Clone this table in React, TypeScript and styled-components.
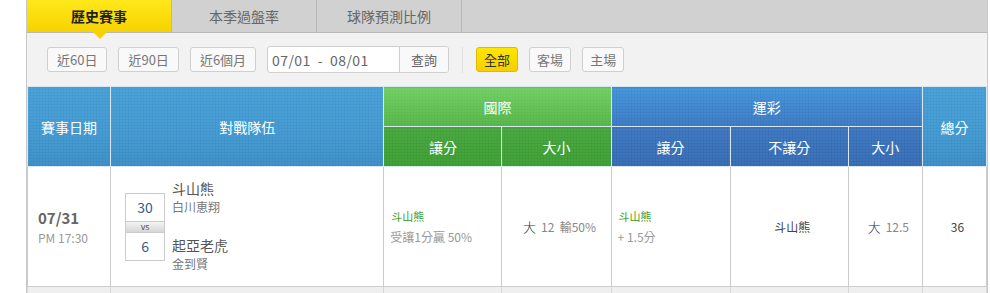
import React from "react";
import styled, { createGlobalStyle } from "styled-components";

const GlobalStyle = createGlobalStyle`
  body {
    margin: 0;
    background: #ffffff;
    font-family: "Noto Sans CJK TC", "Noto Sans", "Liberation Sans", sans-serif;
  }
`;

const Wrapper = styled.div`
  margin-left: 26px;
  width: 960px;
  border-left: 1px solid #c8c8c8;
  border-right: 1px solid #c8c8c8;
`;

const TabBar = styled.div`
  display: flex;
  height: 32px;
  background: #d1d1d1;
  border-bottom: 1px solid #b8b8b8;
`;

const Tab = styled.div<{ $active?: boolean }>`
  position: relative;
  width: 144px;
  display: flex;
  align-items: center;
  justify-content: center;
  font-size: 14px;
  color: ${(p) => (p.$active ? "#222" : "#666")};
  font-weight: ${(p) => (p.$active ? 700 : 400)};
  background: ${(p) =>
    p.$active ? "linear-gradient(#ffe81a, #f7d200)" : "transparent"};
  border-right: 1px solid #b8b8b8;

  ${(p) =>
    p.$active &&
    `
    &::after {
      content: "";
      position: absolute;
      left: 66px;
      bottom: -7px;
      border-left: 7px solid transparent;
      border-right: 7px solid transparent;
      border-top: 7px solid #f7d200;
      z-index: 2;
    }
  `}
`;

const FilterBar = styled.div`
  height: 53px;
  background: #f2f2f2;
  display: flex;
  align-items: center;
  padding-left: 20px;
  gap: 11px;
`;

const Btn = styled.button<{ $on?: boolean; $tight?: boolean }>`
  height: 25px;
  padding: 0 ${(p) => (p.$tight ? 7 : 9)}px;
  font-family: inherit;
  font-size: 13px;
  color: ${(p) => (p.$on ? "#333" : "#777")};
  background: ${(p) => (p.$on ? "linear-gradient(#ffe600, #f5cf00)" : "#f9f9f9")};
  border: 1px solid ${(p) => (p.$on ? "#e2b800" : "#cfcfcf")};
  border-radius: 3px;
  cursor: pointer;
`;

const DateGroup = styled.div`
  display: flex;
  height: 25px;
  border: 1px solid #cfcfcf;
  border-radius: 3px;
  background: #fff;
  overflow: hidden;
`;

const DateText = styled.div`
  width: 127px;
  padding-left: 4px;
  display: flex;
  align-items: center;
  font-size: 14px;
  color: #666;
  letter-spacing: 0.4px;
  white-space: pre;
  border-right: 1px solid #cfcfcf;
`;

const QueryBtn = styled.div`
  width: 48px;
  display: flex;
  align-items: center;
  justify-content: center;
  font-size: 13px;
  color: #666;
  background: #f9f9f9;
`;

const Divider = styled.div`
  width: 1px;
  height: 26px;
  background: #e0e0e0;
  margin: 0 2px;
`;

const Table = styled.table`
  width: 100%;
  border-collapse: collapse;
  table-layout: fixed;
`;

const pattern = `
  repeating-linear-gradient(90deg, rgba(255,255,255,0.07) 0 1px, transparent 1px 3px),
  repeating-linear-gradient(0deg, rgba(255,255,255,0.07) 0 1px, transparent 1px 3px)
`;

const HeadCell = styled.th<{ $tone: "sky" | "green" | "greenDark" | "navy" | "navyDark" }>`
  height: 39px;
  padding: 0;
  color: #fff;
  font-size: 14px;
  font-weight: 400;
  border: 1px solid #d8e6f0;
  background: ${pattern},
    ${(p) =>
      ({
        sky: "linear-gradient(#3f9ad2, #3a93cc 60%, #3589c2)",
        green: "linear-gradient(#6ccc5c, #4fb243)",
        greenDark: "linear-gradient(#3fa236, #359a2d)",
        navy: "linear-gradient(#3c8fd6, #3474c0)",
        navyDark: "linear-gradient(#3570bb, #2f66ae)",
      })[p.$tone]};
`;

const Cell = styled.td<{ $center?: boolean }>`
  padding: 0 0 0 6px;
  height: 119px;
  border: 1px solid #cccccc;
  border-top: none;
  vertical-align: middle;
  text-align: ${(p) => (p.$center ? "center" : "left")};
  font-size: 12px;
  color: #888;
`;

const FillerCell = styled.td`
  height: 8px;
  background: #efefef;
  border: 1px solid #d8d8d8;
`;

const DateMain = styled.div`
  font-size: 15px;
  font-weight: 600;
  color: #666;
  margin-left: 4px;
`;

const DateSub = styled.div`
  font-size: 12px;
  color: #999;
  margin-left: 4px;
  margin-top: 1px;
`;

const Matchup = styled.div`
  display: flex;
  gap: 7px;
  margin-left: 8px;
`;

const ScoreBox = styled.div`
  margin-top: 12px;
  width: 38px;
  height: 66px;
  border: 1px solid #cccccc;
  display: flex;
  flex-direction: column;
`;

const Score = styled.div`
  flex: 1;
  display: flex;
  align-items: center;
  justify-content: center;
  font-size: 14px;
  color: #2c5f8c;
`;

const Vs = styled.div`
  height: 10px;
  line-height: 10px;
  text-align: center;
  font-size: 9px;
  color: #555;
  background: linear-gradient(#f4f4f4, #d6d6d6);
  border-top: 1px solid #cccccc;
  border-bottom: 1px solid #cccccc;
`;

const Teams = styled.div`
  display: flex;
  flex-direction: column;
  margin-top: -2px;
`;

const TeamName = styled.div<{ $gap?: number }>`
  font-size: 14px;
  color: #555;
  line-height: 19px;
  margin-top: ${(p) => p.$gap ?? 0}px;
`;

const Pitcher = styled.div`
  font-size: 12px;
  color: #777;
  line-height: 18px;
`;

const Pick = styled.div`
  font-size: 11px;
  color: #3a9a2a;
  margin-left: 1px;
`;

const Note = styled.div`
  font-size: 12px;
  color: #999;
  margin-top: 4px;
`;

const Dark = styled.span`
  color: #333;
  margin-right: 5px;
  font-size: 13px;
  font-weight: 300;
`;

const Plain = styled.span`
  font-size: 12px;
  color: #444;
`;

export default function App() {
  return (
    <>
      <GlobalStyle />
      <Wrapper>
        <TabBar>
          <Tab $active>歷史賽事</Tab>
          <Tab>本季過盤率</Tab>
          <Tab>球隊預測比例</Tab>
        </TabBar>

        <FilterBar>
          <Btn>近60日</Btn>
          <Btn>近90日</Btn>
          <Btn>近6個月</Btn>
          <DateGroup>
            <DateText>{"07/01  -  08/01"}</DateText>
            <QueryBtn>查詢</QueryBtn>
          </DateGroup>
          <Divider />
          <Btn $on $tight>全部</Btn>
          <Btn $tight>客場</Btn>
          <Btn $tight>主場</Btn>
        </FilterBar>

        <Table>
          <colgroup>
            <col style={{ width: 83 }} />
            <col style={{ width: 273 }} />
            <col style={{ width: 118 }} />
            <col style={{ width: 109 }} />
            <col style={{ width: 119 }} />
            <col style={{ width: 118 }} />
            <col style={{ width: 74 }} />
            <col style={{ width: 64 }} />
          </colgroup>
          <thead>
            <tr>
              <HeadCell $tone="sky" rowSpan={2}>賽事日期</HeadCell>
              <HeadCell $tone="sky" rowSpan={2}>對戰隊伍</HeadCell>
              <HeadCell $tone="green" colSpan={2}>國際</HeadCell>
              <HeadCell $tone="navy" colSpan={3}>運彩</HeadCell>
              <HeadCell $tone="sky" rowSpan={2}>總分</HeadCell>
            </tr>
            <tr>
              <HeadCell $tone="greenDark">讓分</HeadCell>
              <HeadCell $tone="greenDark">大小</HeadCell>
              <HeadCell $tone="navyDark">讓分</HeadCell>
              <HeadCell $tone="navyDark">不讓分</HeadCell>
              <HeadCell $tone="navyDark">大小</HeadCell>
            </tr>
          </thead>
          <tbody>
            <tr>
              <Cell>
                <DateMain>07/31</DateMain>
                <DateSub>PM 17:30</DateSub>
              </Cell>
              <Cell>
                <Matchup>
                  <ScoreBox>
                    <Score>30</Score>
                    <Vs>vs</Vs>
                    <Score>6</Score>
                  </ScoreBox>
                  <Teams>
                    <TeamName>斗山熊</TeamName>
                    <Pitcher>白川恵翔</Pitcher>
                    <TeamName $gap={20}>起亞老虎</TeamName>
                    <Pitcher>金到賢</Pitcher>
                  </Teams>
                </Matchup>
              </Cell>
              <Cell>
                <Pick>斗山熊</Pick>
                <Note>受讓1分贏 50%</Note>
              </Cell>
              <Cell $center>
                <Dark>大</Dark>12&nbsp;&nbsp;輸50%
              </Cell>
              <Cell>
                <Pick>斗山熊</Pick>
                <Note>+ 1.5分</Note>
              </Cell>
              <Cell $center>
                <Plain>斗山熊</Plain>
              </Cell>
              <Cell $center>
                <Dark>大</Dark>12.5
              </Cell>
              <Cell $center>
                <Plain>36</Plain>
              </Cell>
            </tr>
            <tr>
              {Array.from({ length: 8 }).map((_, i) => (
                <FillerCell key={i} />
              ))}
            </tr>
          </tbody>
        </Table>
      </Wrapper>
    </>
  );
}
